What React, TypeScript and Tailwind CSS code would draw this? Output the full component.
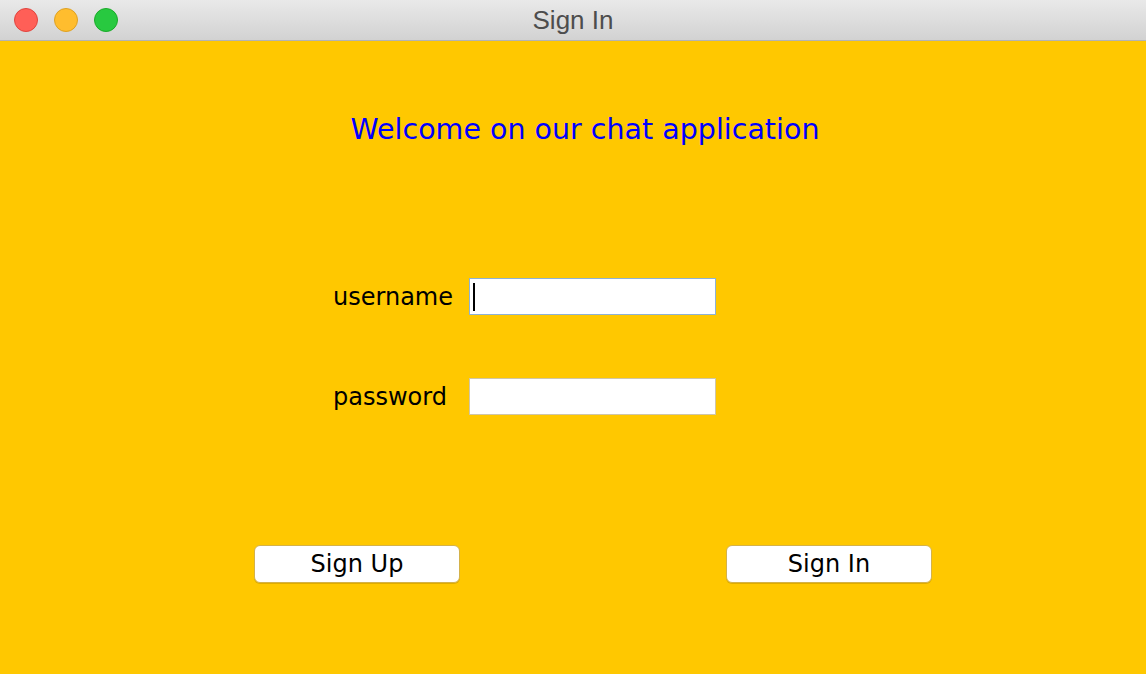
const TrafficLights = () => (
  <div className="flex items-center gap-[16px] pl-[14px]">
    <span className="h-[24px] w-[24px] rounded-full border border-[#e0443e] bg-[#ff5f57]" />
    <span className="h-[24px] w-[24px] rounded-full border border-[#dea123] bg-[#ffbd2e]" />
    <span className="h-[24px] w-[24px] rounded-full border border-[#1aab29] bg-[#28c940]" />
  </div>
)

const Field = ({ label, focused }: { label: string; focused?: boolean }) => (
  <div className="flex items-center">
    <span className="w-[136px] pt-[2px] text-[24px] leading-[37px] text-black">{label}</span>
    <div
      className={`flex h-[37px] w-[247px] items-center bg-white border ${
        focused ? "border-[#8db2d6]" : "border-[#cfc6a8]"
      }`}
    >
      {focused && <span className="ml-[3px] h-[28px] w-[2px] bg-black" />}
    </div>
  </div>
)

const MacButton = ({ children }: { children: string }) => (
  <button className="h-[38px] w-[206px] rounded-[6px] border border-[#d4b24a] bg-white text-[24px] leading-[36px] text-black shadow-[0_1px_0_rgba(160,120,0,0.35)]">
    {children}
  </button>
)

export default function App() {
  return (
    <div className="flex h-[674px] w-[1146px] flex-col overflow-hidden font-['DejaVu_Sans',sans-serif]">
      {/* title bar */}
      <div className="relative flex h-[41px] items-center border-b border-[#b3b3b3] bg-gradient-to-b from-[#e9e9e9] to-[#d2d2d2]">
        <TrafficLights />
        <div className="absolute inset-0 flex items-center justify-center font-['Liberation_Sans',sans-serif] text-[26px] text-[#4d4d4d]">
          Sign In
        </div>
      </div>

      {/* body */}
      <div className="flex flex-1 flex-col bg-[#ffc800]">
        <h1 className="pt-[72px] pl-[24px] text-center text-[28.5px] leading-[34px] text-[#0000ff]">
          Welcome on our chat application
        </h1>

        <div className="ml-[333px] mt-[130px] flex flex-col gap-[61px]">
          <Field label="username" focused />
          <Field label="password" />
        </div>

        <div className="ml-[254px] mt-[129px] flex gap-[266px]">
          <MacButton>Sign Up</MacButton>
          <MacButton>Sign In</MacButton>
        </div>
      </div>
    </div>
  )
}
